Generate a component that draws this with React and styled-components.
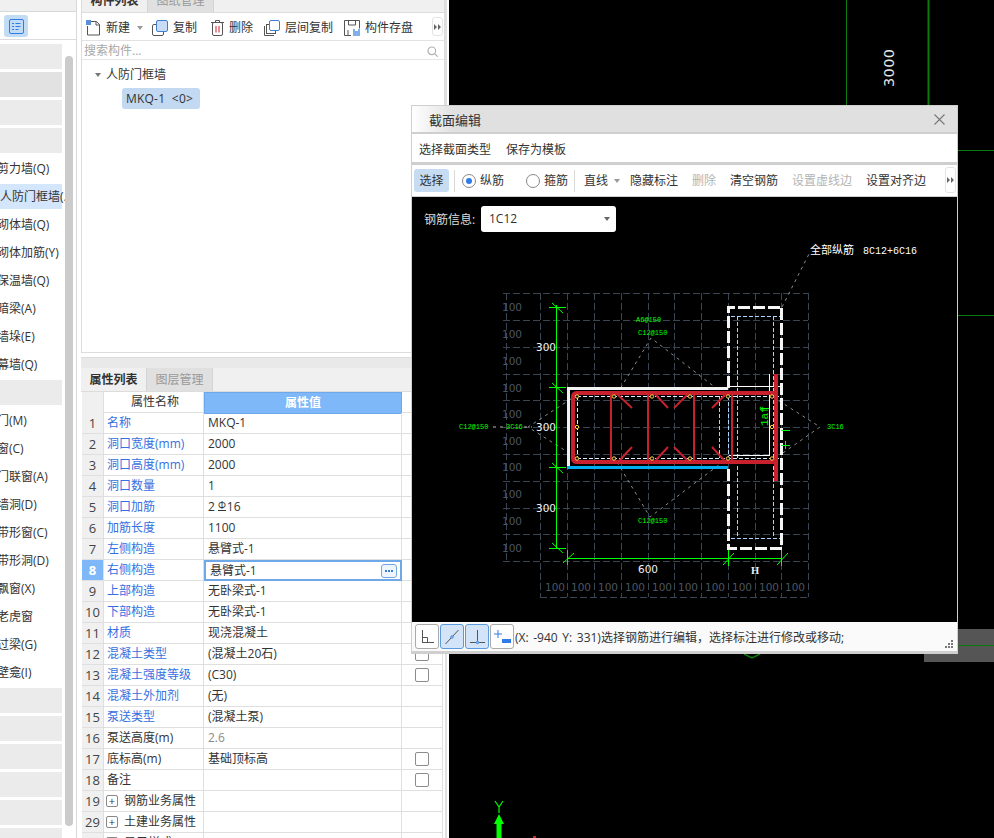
import React from 'react';
import styled, { createGlobalStyle } from 'styled-components';

const FONT = '"Open Sans", "Noto Sans CJK SC", sans-serif';

const GlobalStyle = createGlobalStyle`
  html, body {
    margin: 0;
    padding: 0;
    background: #fff;
    overflow: hidden;
  }
  * {
    box-sizing: border-box;
  }
`;

const Page = styled.div`
  position: relative;
  display: flex;
  width: 994px;
  height: 838px;
  overflow: hidden;
  font-family: ${FONT};
  font-size: 12px;
  line-height: 16px;
  color: #333;
`;

/* left nav */
const Sidebar = styled.aside`
  width: 77px;
  flex: none;
  margin-right: 4px;
  border-right: 1px solid #d8d8d8;
  display: flex;
  flex-direction: column;
  position: relative;
  overflow: hidden;
`;

const SideTop = styled.div`
  height: 12px;
  flex: none;
  background: #f0f0f0;
  border-bottom: 1px solid #d8d8d8;
`;

const SideTools = styled.div`
  height: 28px;
  flex: none;
  padding: 3px 0 0 4px;
  border-bottom: 1px solid #dcdcdc;
`;

const ToolIcon = styled.div`
  width: 24px;
  height: 22px;
  border-radius: 3px;
  background: #c2dcf6;
  display: flex;
  align-items: center;
  justify-content: center;
`;

const SideList = styled.div`
  padding-top: 4px;
  display: flex;
  flex-direction: column;
  gap: 3px;
  width: 62px;
`;

const SideRow = styled.div`
  height: 25px;
  flex: none;
  line-height: 25px;
  white-space: nowrap;
  text-indent: ${(p) => (p.$first ? '0' : '-3px')};
  background: ${(p) => p.$bg || 'transparent'};
`;

const ScrollThumb = styled.div`
  position: absolute;
  left: 65px;
  top: 56px;
  width: 8px;
  height: 770px;
  border-radius: 4px;
  background: #cbcbcb;
`;

/* middle column */
const Middle = styled.div`
  width: 364px;
  flex: none;
  display: flex;
  flex-direction: column;
`;

const TopPanel = styled.section`
  height: 353px;
  flex: none;
  border-left: 1px solid #dcdcdc;
  border-right: 1px solid #dcdcdc;
  border-bottom: 1px solid #dcdcdc;
  display: flex;
  flex-direction: column;
`;

const TabBar = styled.div`
  display: flex;
  flex: none;
  height: ${(p) => p.$h}px;
  margin-top: ${(p) => p.$top || 0}px;
  background: #f0f0f0;
  border-bottom: 1px solid #dcdcdc;
`;

const Tab = styled.div`
  width: 66px;
  display: flex;
  align-items: center;
  justify-content: center;
  padding-top: ${(p) => p.$pad || 0}px;
  font-weight: ${(p) => (p.$active ? 700 : 400)};
  color: ${(p) => (p.$active ? '#333' : '#999')};
  background: ${(p) => (p.$active ? '#f0f0f0' : '#e0e0e0')};
  border-right: 1px solid #d4d4d4;
`;

const Toolbar = styled.div`
  height: 28px;
  flex: none;
  display: flex;
  align-items: center;
  padding: 2px 0 0 4px;
  border-bottom: 1px solid #e2e2e2;
  position: relative;
`;

const ToolItem = styled.div`
  display: flex;
  align-items: center;
  gap: 5px;
  margin-left: ${(p) => p.$left || 0}px;
  margin-right: ${(p) => p.$gap}px;
  white-space: nowrap;
`;

const Caret = styled.span`
  width: 0;
  height: 0;
  display: inline-block;
  border-left: 3px solid transparent;
  border-right: 3px solid transparent;
  border-top: 4px solid ${(p) => p.$color || '#999'};
`;

const MoreButton = styled.div`
  position: absolute;
  right: ${(p) => p.$right}px;
  top: ${(p) => p.$top}px;
  width: 11px;
  height: ${(p) => p.$h}px;
  background: #fff;
  border: 1px solid #e4e4e4;
  border-radius: 3px;
  display: flex;
  align-items: center;
  justify-content: center;
`;

const SearchRow = styled.div`
  height: 19px;
  flex: none;
  display: flex;
  align-items: center;
  justify-content: space-between;
  padding: 2px 6px 0 2px;
  color: #a8a8a8;
  border-bottom: 1px solid #e6e6e6;
`;

const Tree = styled.div`
  flex: 1;
  padding: 6px 0 0 13px;
`;

const TreeRoot = styled.div`
  display: flex;
  align-items: center;
  gap: 5px;
  height: 18px;
`;

const TreeLeaf = styled.div`
  margin: 4px 0 0 27px;
  width: 78px;
  height: 21px;
  line-height: 21px;
  padding-left: 4px;
  border-radius: 3px;
  background: #c2d9f1;
  white-space: pre;
  letter-spacing: 0.2px;
`;

const PanelGap = styled.div`
  height: 11px;
  margin-top: 4px;
  flex: none;
  background: #e9e9e9;
  border-top: 1px solid #dcdcdc;
`;

const PropsTable = styled.div`
  margin-left: 1px;
  width: 361px;
`;

const Row = styled.div`
  display: grid;
  grid-template-columns: 22px 100px 198px 41px;
  height: 21px;
  line-height: 20px;
  border-bottom: 1px solid #dfdfdf;
  border-right: 1px solid #dfdfdf;
  white-space: nowrap;
`;

const NumCell = styled.div`
  text-align: center;
  border-right: 1px solid #dfdfdf;
  background: ${(p) => (p.$active ? '#7fb8f8' : '#f0f0f0')};
  color: ${(p) => (p.$active ? '#fff' : '#444')};
  font-weight: ${(p) => (p.$active ? 700 : 400)};
  font-size: 13px;
`;

const NameCell = styled.div`
  padding-left: ${(p) => (p.$tree ? '2px' : '3px')};
  border-right: 1px solid #dfdfdf;
  text-align: ${(p) => (p.$head ? 'center' : 'left')};
  color: ${(p) => (p.$blue ? '#3670e0' : '#333')};
  display: ${(p) => (p.$tree ? 'flex' : 'block')};
  align-items: center;
  gap: 6px;
`;

const ValueCell = styled.div`
  padding-left: 4px;
  border-right: 1px solid #dfdfdf;
  color: ${(p) => (p.$muted ? '#8a8a8a' : '#333')};
`;

const HeadValue = styled.div`
  background: #7fb8f8;
  color: #fff;
  font-weight: 700;
  text-align: center;
  border: 1px solid #6fa8ea;
`;

const EditCell = styled.div`
  border: 2px solid #6fa8e6;
  padding-left: 4px;
  line-height: 17px;
  margin-bottom: -1px;
  display: flex;
  align-items: center;
  justify-content: space-between;
  padding-right: 3px;
`;

const DotsButton = styled.span`
  width: 16px;
  height: 14px;
  border: 1px solid #6fa8e6;
  border-radius: 3px;
  background: #eef5fd;
  display: flex;
  align-items: center;
  justify-content: center;
  gap: 1px;
  & i {
    width: 2px;
    height: 2px;
    background: #3c7fd0;
  }
`;

const CheckCell = styled.div`
  display: flex;
  align-items: center;
  padding-left: 13px;
`;

const Check = styled.span`
  width: 14px;
  height: 14px;
  border: 1px solid #8c8c8c;
  border-radius: 2px;
  background: #fff;
`;

const Expand = styled.span`
  width: 12px;
  height: 12px;
  border: 1px solid #888;
  border-radius: 2px;
  line-height: 9px;
  text-align: center;
  font-size: 11px;
`;

const BarSymbol = styled.span`
  display: inline-block;
  font-size: 10px;
  line-height: 10px;
  margin: 0 1px 0 3px;
  vertical-align: 2px;
  border-bottom: 1px solid #333;
`;

const Strip = styled.div`
  width: 4px;
  flex: none;
  border-left: 2px solid #e0e0e0;
`;

/* black cad area */
const Canvas = styled.main`
  flex: 1;
  background: #000;
  min-width: 0;
`;

const Drawing = styled.svg`
  display: block;
`;

const GrayBlock = styled.div`
  position: absolute;
  left: 924px;
  top: 629px;
  width: 70px;
  height: 33px;
  padding-top: 16px;
  background: #555;
`;

const GrayLine = styled.div`
  height: 1px;
  background: #0a7a0a;
`;

/* dialog */
const Dialog = styled.div`
  position: absolute;
  left: 411px;
  top: 105px;
  width: 547px;
  height: 549px;
  background: #cfcfcf;
  display: flex;
  flex-direction: column;
  padding: 1px 1px 3px 1px;
`;

const TitleBar = styled.div`
  height: 26px;
  flex: none;
  display: flex;
  align-items: center;
  justify-content: space-between;
  padding: 1px 12px 0 17px;
  font-size: 13px;
  background: linear-gradient(90deg, #fff 0, #e0e0e0 42px);
`;

const MenuBar = styled.div`
  height: 28px;
  margin-top: 2px;
  flex: none;
  background: #fff;
  display: flex;
  align-items: center;
  padding: 4px 0 0 7px;
  gap: 15px;
`;

const DialogTools = styled.div`
  height: 31px;
  margin-top: 3px;
  flex: none;
  background: #fff;
  display: flex;
  align-items: center;
  padding-left: 2px;
  position: relative;
`;

const SelectBtn = styled.div`
  width: 35px;
  height: 23px;
  line-height: 23px;
  text-align: center;
  border-radius: 3px;
  background: #c5dcf3;
`;

const VSep = styled.div`
  width: 1px;
  height: 22px;
  background: #d8d8d8;
  margin: ${(p) => p.$m};
`;

const RadioWrap = styled.div`
  display: flex;
  align-items: center;
  gap: 4px;
  margin-right: ${(p) => p.$gap}px;
`;

const Radio = styled.span`
  width: 14px;
  height: 14px;
  border-radius: 50%;
  border: 1px solid #888;
  background: #fff;
  display: flex;
  align-items: center;
  justify-content: center;
  & i {
    width: 6px;
    height: 6px;
    border-radius: 50%;
    background: #2f7be8;
  }
`;

const DlgTool = styled.div`
  margin-right: ${(p) => p.$gap ?? 14}px;
  padding-top: 1px;
  white-space: nowrap;
  color: ${(p) => (p.$off ? '#b4b4b4' : '#333')};
  display: flex;
  align-items: center;
  gap: 6px;
`;

const DialogCanvas = styled.div`
  flex: 1;
  margin-top: 1px;
  background: #000;
  position: relative;
  min-height: 0;
`;

const InfoLabel = styled.div`
  position: absolute;
  left: 12px;
  top: 15px;
  color: #ddd;
`;

const InfoSelect = styled.div`
  position: absolute;
  left: 69px;
  top: 9px;
  width: 135px;
  height: 26px;
  background: #fff;
  border-radius: 3px;
  display: flex;
  align-items: center;
  justify-content: space-between;
  padding: 0 6px 0 8px;
`;

const StatusBar = styled.div`
  height: 29px;
  flex: none;
  background: #fafafa;
  display: flex;
  align-items: center;
  padding-left: 3px;
  position: relative;
  white-space: nowrap;
`;

const SnapButton = styled.div`
  width: 24px;
  height: 25px;
  margin-right: 1px;
  border-radius: 3px;
  border: 1px solid ${(p) => (p.$on ? '#5a9be0' : '#aaa')};
  background: ${(p) => (p.$on ? '#d3e4f9' : '#fff')};
  display: flex;
  align-items: center;
  justify-content: center;
`;

const StatusText = styled.span`
  font-size: 12px;
  word-spacing: 1.5px;
  margin-top: 3px;
`;

const Grip = styled.svg`
  position: absolute;
  right: 4px;
  bottom: 3px;
`;

const sideRows = [
  { bg: '#ebebeb' }, { bg: '#e2e2e2' }, { bg: '#ebebeb' }, { bg: '#ebebeb' },
  { t: '剪力墙(Q)' }, { t: '人防门框墙(.', bg: '#d3e6fb', first: true }, { t: '砌体墙(Q)' }, { t: '砌体加筋(Y)' },
  { t: '保温墙(Q)' }, { t: '暗梁(A)' }, { t: '墙垛(E)' }, { t: '幕墙(Q)' },
  { bg: '#ebebeb' },
  { t: '门(M)' }, { t: '窗(C)' }, { t: '门联窗(A)' }, { t: '墙洞(D)' }, { t: '带形窗(C)' },
  { t: '带形洞(D)' }, { t: '飘窗(X)' }, { t: '老虎窗' }, { t: '过梁(G)' }, { t: '壁龛(I)' },
  { bg: '#ebebeb' }, { bg: '#ebebeb' }, { bg: '#ebebeb' }, { bg: '#ebebeb' }, { bg: '#ebebeb' }, { bg: '#ebebeb' },
];

const props = [
  { n: 1, name: '名称', value: 'MKQ-1', blue: true },
  { n: 2, name: '洞口宽度(mm)', value: '2000', blue: true },
  { n: 3, name: '洞口高度(mm)', value: '2000', blue: true },
  { n: 4, name: '洞口数量', value: '1', blue: true },
  { n: 5, name: '洞口加筋', value: <>2<BarSymbol>Φ</BarSymbol>16</>, blue: true },
  { n: 6, name: '加筋长度', value: '1100', blue: true },
  { n: 7, name: '左侧构造', value: '悬臂式-1', blue: true },
  { n: 8, name: '右侧构造', value: '悬臂式-1', blue: true, edit: true },
  { n: 9, name: '上部构造', value: '无卧梁式-1', blue: true },
  { n: 10, name: '下部构造', value: '无卧梁式-1', blue: true },
  { n: 11, name: '材质', value: '现浇混凝土', blue: true },
  { n: 12, name: '混凝土类型', value: '(混凝土20石)', blue: true, check: true },
  { n: 13, name: '混凝土强度等级', value: '(C30)', blue: true, check: true },
  { n: 14, name: '混凝土外加剂', value: '(无)', blue: true },
  { n: 15, name: '泵送类型', value: '(混凝土泵)', blue: true },
  { n: 16, name: '泵送高度(m)', value: '2.6', muted: true },
  { n: 17, name: '底标高(m)', value: '基础顶标高', check: true },
  { n: 18, name: '备注', value: '', check: true },
  { n: 19, name: '钢筋业务属性', tree: true },
  { n: 29, name: '土建业务属性', tree: true },
  { n: '', name: '显示样式', tree: true },
];

const NewIcon = () => (
  <svg width="15" height="16" viewBox="0 0 15 16" fill="none">
    <path d="M1.5 6v9h12V4.500L10.500 1.500H4" stroke="#555" />
    <path d="M10 1.500v3.500h3.500" stroke="#555" />
    <rect x="0" y="0" width="5" height="5" fill="#5a90d8" />
  </svg>
);

const CopyIcon = () => (
  <svg width="16" height="16" viewBox="0 0 16 16" fill="none">
    <rect x="0.5" y="4.500" width="11" height="11" rx="1.500" stroke="#555" fill="#fff" />
    <rect x="4.500" y="0.500" width="11" height="11" rx="1.500" stroke="#3e7fd0" fill="#c9dcf5" />
  </svg>
);

const TrashIcon = () => (
  <svg width="13" height="16" viewBox="0 0 13 16" fill="none" stroke="#555">
    <path d="M0 2.500h13M4.500 2.500V.5h4v2" />
    <rect x="1.500" y="2.500" width="10" height="13" rx="1.500" />
    <path d="M5 6v6.500M8 6v6.500" stroke="#d0202a" />
  </svg>
);

const FloorCopyIcon = () => (
  <svg width="16" height="16" viewBox="0 0 16 16" fill="none">
    <path d="M.5 6v9.500H10" stroke="#555" />
    <rect x="2.500" y="4.500" width="9" height="9" fill="#fff" stroke="#555" />
    <rect x="5.500" y="0.500" width="10" height="10" rx="1.500" stroke="#3e7fd0" fill="#fff" />
  </svg>
);

const SaveIcon = () => (
  <svg width="16" height="16" viewBox="0 0 16 16" fill="none">
    <path d="M7 15.500H.5V.5h15v8" stroke="#555" />
    <path d="M4.500 1v4h7V1M4 15v-5" stroke="#555" />
    <rect x="9" y="9" width="7" height="7" fill="#7fb0e8" />
    <rect x="11" y="9" width="3" height="2" fill="#fff" />
  </svg>
);

const SearchIcon = () => (
  <svg width="11" height="11" viewBox="0 0 11 11" fill="none" stroke="#b0b0b0" strokeWidth="1.200">
    <circle cx="4.800" cy="4.800" r="3.800" />
    <path d="M7.700 7.700l3 3" />
  </svg>
);

const ListIcon = () => (
  <svg width="15" height="15" viewBox="0 0 15 15" fill="none" stroke="#2f7be8">
    <rect x=".5" y=".5" width="14" height="14" rx="1.500" />
    <path d="M3 4.500h2M6.500 4.500h5M3 7.500h2M6.500 7.500h5M3 10.500h2M6.500 10.500h3" />
  </svg>
);

const More = () => (
  <svg width="7" height="6" viewBox="0 0 7 6" fill="#666">
    <path d="M0 0l3 3-3 3zM4 0l3 3-3 3z" />
  </svg>
);

const CloseIcon = () => (
  <svg width="11" height="11" viewBox="0 0 11 11" stroke="#777" strokeWidth="1.100">
    <path d="M.5.500l10 10M10.500.500l-10 10" />
  </svg>
);

const Snap1 = () => (
  <svg width="16" height="16" viewBox="0 0 16 16" fill="none" stroke="#555">
    <path d="M3.500 1v13M3 13.500h12M3 8.500h5.500v5" />
  </svg>
);
const Snap2 = () => (
  <svg width="16" height="16" viewBox="0 0 16 16" fill="none" stroke="#555">
    <path d="M1.500 15L14.500 1" />
    <circle cx="8" cy="8" r="1.300" fill="#7fb0e8" stroke="#5a9be0" />
  </svg>
);
const Snap3 = () => (
  <svg width="16" height="16" viewBox="0 0 16 16" fill="none" stroke="#555">
    <path d="M8.500 1v12M1 13.500h15" />
    <circle cx="8.500" cy="13.500" r="1.300" fill="#7fb0e8" stroke="#5a9be0" />
  </svg>
);
const Snap4 = () => (
  <svg width="18" height="16" viewBox="0 0 18 16" fill="none">
    <path d="M5 1v8M1 5h8" stroke="#2f7be8" />
    <rect x="9" y="10" width="9" height="4" fill="#2f7be8" />
  </svg>
);

const hGrid = [293, 320, 347, 374, 400, 427, 454, 481, 508, 534, 561];
const vGrid = [540, 567, 594, 621, 648, 674, 701, 728, 755, 781, 808];
const leftLabels = [307, 334, 361, 388, 414, 441, 467, 494, 521, 548];
const bottomLabels = [555, 581, 608, 635, 662, 688, 715, 742, 769, 795];
const dotXs = [577, 614, 652, 690, 728, 772];

const GREEN = '#00ff00';
const RED = '#c8202d';
const ICE = '#a8d4ff';
const DIAG = '#8a8a8a';

const SectionDrawing = () => (
  <Drawing width="545" height="425" viewBox="412 197 545 425" shapeRendering="crispEdges">
    {/* grid */}
    <g stroke="#3a4553" strokeDasharray="7 3">
      {hGrid.map((y) => (
        <line key={y} x1="503" x2="808" y1={y + 0.5} y2={y + 0.5} />
      ))}
      <line x1="506.500" x2="506.500" y1="293" y2="561" />
      {vGrid.map((x) => (
        <line key={x} x1={x + 0.5} x2={x + 0.5} y1="293" y2="597" />
      ))}
      <line x1="540" x2="808" y1="597.500" y2="597.500" />
    </g>
    <g fill="#4c5662" fontFamily="DejaVu Sans, sans-serif" fontSize="10.500" textAnchor="middle">
      {leftLabels.map((y) => (
        <text key={y} x="512" y={y + 4}>100</text>
      ))}
      {bottomLabels.map((x) => (
        <text key={x} x={x} y="591">100</text>
      ))}
    </g>

    {/* leader lines */}
    <g stroke={DIAG} strokeDasharray="3 4" fill="none" shapeRendering="auto">
      <path d="M617 394L651 338L725 395" />
      <path d="M577 395L528 427L577 458" />
      <path d="M617 462L650 517L728 458" />
      <path d="M773 397L820 427L780 455" />
      <path d="M782 307L810 252" />
      <path d="M493 427H505M524 427H532" stroke="#bbb" />
    </g>

    {/* thin ice-blue stirrups */}
    <g stroke={ICE} strokeDasharray="4 2" fill="none">
      <path d="M731 316.500H781M731 538.500H781" />
      <path d="M737.500 316V538M773.500 316V538" />
      <path d="M719.500 396V458M728.500 396V458" />
      <path d="M577 396.500H781M577 458.500H781" stroke="#dfeeff" />
      <path d="M577.500 396V458" stroke="#dfeeff" />
    </g>

    {/* concrete outline */}
    <g fill="none">
      <path d="M567 388H728M568.500 388V466" stroke="#f2f2f2" strokeWidth="3" />
      <path d="M567 467.500H728" stroke="#00aeef" strokeWidth="3" />
      <path d="M728.500 388V307H781.500V548H728.500V467" stroke="#f5f5f5" strokeWidth="3" strokeDasharray="12 3" />
      <path d="M729 386.500H781M769.500 374V455.500H729" stroke="#fff" />
    </g>

    {/* rebar */}
    <g fill="none" stroke={RED} shapeRendering="auto">
      <path d="M775 393H577Q573 393 573 397V458Q573 462 577 462H775" strokeWidth="4" />
      <path d="M776 374V481" strokeWidth="4" />
      <path d="M611 393V462M648 393V462M694 393V462M732 393V462" strokeWidth="2" />
      <path
        d="M617 394L632 408M655 394L668 408M674 408L688 394M712 408L726 394M618 462L632 447M656 460L668 447M674 447L688 461M712 447L724 460"
        strokeWidth="2"
      />
    </g>
    <g fill="#000" stroke="#ffd84a" shapeRendering="auto">
      {dotXs.map((x) => (
        <React.Fragment key={x}>
          <circle cx={x} cy="396.500" r="1.700" />
          <circle cx={x} cy="458.500" r="1.700" />
        </React.Fragment>
      ))}
      <circle cx="577" cy="427" r="1.700" />
      <circle cx="772" cy="427" r="1.700" />
    </g>

    {/* dimensions */}
    <g stroke={GREEN} fill="none">
      <path d="M556.500 305V548M549 307.500H566M549 387.500H566M549 467.500H566M549 548.500H566" />
      <path d="M567 558.500H781" />
      <path d="M567.500 550V565M728.500 550V566M781.500 550V566" />
      <g shapeRendering="auto">
        <path d="M552 303L563 313M552 383L563 393M552 463L563 473M552 543L563 553" />
        <path d="M563 563L574 553M723 565L734 553M777 565L788 553" />
      </g>
      <path d="M761 408H769M781 430H789V431M781 445H790M785 441V449" />
    </g>
    <text x="768" y="426" fill={GREEN} fontFamily="Liberation Mono, monospace" fontSize="11" transform="rotate(-90 768 426)" shapeRendering="auto">1af</text>

    <g fill="#f2f2f2" fontFamily="DejaVu Sans, sans-serif" fontSize="10.500" textAnchor="middle">
      <text x="546" y="351">300</text>
      <text x="546" y="431">300</text>
      <text x="546" y="512">300</text>
      <text x="648" y="573">600</text>
      <text x="755" y="574" fontFamily="Liberation Serif, serif" fontWeight="700">H</text>
    </g>
    <text x="810" y="254" fill="#fff" fontFamily={FONT.replace(/"/g, '')} fontSize="11">全部纵筋</text>
    <text x="863" y="254" fill="#fff" fontFamily="Liberation Mono, monospace" fontSize="10">8C12+6C16</text>
    <g fill={GREEN} fontFamily="Liberation Mono, monospace" fontSize="7">
      <text x="636" y="322">A6@150</text>
      <text x="638" y="335">C12@150</text>
      <text x="638" y="523">C12@150</text>
      <text x="459" y="429">C12@150</text>
      <text x="506" y="429">3C16</text>
      <text x="827" y="429">3C16</text>
    </g>
  </Drawing>
);

const BackgroundDrawing = () => (
  <Drawing width="545" height="838" viewBox="449 0 545 838">
    <g stroke="#0a7a0a" fill="none">
      <path d="M846.500 0V110" />
      <path d="M928.500 0V110" strokeWidth="2" />
      <path d="M958 150.500H994M958 315.500H994" />
      <path d="M744 654L752 658L760 654" strokeWidth="1.500" />
    </g>
    <text
      x="894"
      y="87"
      fill="#e6e6e6"
      fontFamily="DejaVu Sans, sans-serif"
      fontSize="14.500"
      transform="rotate(-90 894 87)"
      textLength="38"
    >
      3000
    </text>
    <path d="M495 801L499 807L503 801M499 807V813" stroke={GREEN} fill="none" strokeWidth="1.200" />
    <path d="M499 814L504 824H501.500V838H496.500V824H494Z" fill={GREEN} />
    <rect x="533" y="836" width="3" height="2" fill="#d02020" />
  </Drawing>
);

const App = () => (
  <Page>
    <GlobalStyle />
    <Sidebar>
      <SideTop />
      <SideTools>
        <ToolIcon>
          <ListIcon />
        </ToolIcon>
      </SideTools>
      <SideList>
        {sideRows.map((r, i) => (
          <SideRow key={i} $bg={r.bg} $first={r.first}>
            {r.t}
          </SideRow>
        ))}
      </SideList>
      <ScrollThumb />
    </Sidebar>

    <Middle>
      <TopPanel>
        <TabBar $h={26} $top={-13}>
          <Tab $active $pad={3}>构件列表</Tab>
          <Tab $pad={3}>图纸管理</Tab>
        </TabBar>
        <Toolbar>
          <ToolItem $gap={7}>
            <NewIcon />
            新建
          </ToolItem>
          <Caret />
          <ToolItem $gap={14} $left={9}>
            <CopyIcon />
            复制
          </ToolItem>
          <ToolItem $gap={11}>
            <TrashIcon />
            删除
          </ToolItem>
          <ToolItem $gap={11}>
            <FloorCopyIcon />
            层间复制
          </ToolItem>
          <ToolItem $gap={0}>
            <SaveIcon />
            构件存盘
          </ToolItem>
          <MoreButton $right={1} $top={4} $h={19}>
            <More />
          </MoreButton>
        </Toolbar>
        <SearchRow>
          搜索构件...
          <SearchIcon />
        </SearchRow>
        <Tree>
          <TreeRoot>
            <Caret $color="#777" />
            人防门框墙
          </TreeRoot>
          <TreeLeaf>MKQ-1  &lt;0&gt;</TreeLeaf>
        </Tree>
      </TopPanel>

      <PanelGap />
      <TabBar $h={24}>
        <Tab $active>属性列表</Tab>
        <Tab>图层管理</Tab>
      </TabBar>
      <PropsTable>
        <Row>
          <NumCell />
          <NameCell $head>属性名称</NameCell>
          <HeadValue>属性值</HeadValue>
          <div />
        </Row>
        {props.map((p) => (
          <Row key={p.n || p.name}>
            <NumCell $active={p.edit}>{p.n}</NumCell>
            <NameCell $blue={p.blue} $tree={p.tree}>
              {p.tree && <Expand>+</Expand>}
              {p.name}
            </NameCell>
            {p.edit ? (
              <EditCell>
                {p.value}
                <DotsButton>
                  <i />
                  <i />
                  <i />
                </DotsButton>
              </EditCell>
            ) : (
              <ValueCell $muted={p.muted}>{p.value}</ValueCell>
            )}
            <CheckCell>{p.check && <Check />}</CheckCell>
          </Row>
        ))}
      </PropsTable>
    </Middle>

    <Strip />
    <Canvas>
      <BackgroundDrawing />
    </Canvas>

    <GrayBlock>
      <GrayLine />
    </GrayBlock>

    <Dialog>
      <TitleBar>
        截面编辑
        <CloseIcon />
      </TitleBar>
      <MenuBar>
        <span>选择截面类型</span>
        <span>保存为模板</span>
      </MenuBar>
      <DialogTools>
        <SelectBtn>选择</SelectBtn>
        <VSep $m="0 7px 0 5px" />
        <RadioWrap $gap={22}>
          <Radio>
            <i />
          </Radio>
          纵筋
        </RadioWrap>
        <RadioWrap $gap={6}>
          <Radio />
          箍筋
        </RadioWrap>
        <VSep $m="0 9px 0 0" />
        <DlgTool $gap={10}>
          直线
          <Caret />
        </DlgTool>
        <DlgTool>隐藏标注</DlgTool>
        <DlgTool $off>删除</DlgTool>
        <DlgTool>清空钢筋</DlgTool>
        <DlgTool $off>设置虚线边</DlgTool>
        <DlgTool>设置对齐边</DlgTool>
        <MoreButton $right={1} $top={2} $h={26}>
          <More />
        </MoreButton>
      </DialogTools>
      <DialogCanvas>
        <SectionDrawing />
        <InfoLabel>钢筋信息:</InfoLabel>
        <InfoSelect>
          1C12
          <Caret $color="#666" />
        </InfoSelect>
      </DialogCanvas>
      <StatusBar>
        <SnapButton>
          <Snap1 />
        </SnapButton>
        <SnapButton $on>
          <Snap2 />
        </SnapButton>
        <SnapButton $on>
          <Snap3 />
        </SnapButton>
        <SnapButton>
          <Snap4 />
        </SnapButton>
        <StatusText>(X: -940 Y: 331)选择钢筋进行编辑，选择标注进行修改或移动;</StatusText>
        <Grip width="8" height="8" viewBox="0 0 8 8" fill="#777">
          <rect x="6" y="0" width="2" height="2" />
          <rect x="3" y="3" width="2" height="2" />
          <rect x="6" y="3" width="2" height="2" />
          <rect x="0" y="6" width="2" height="2" />
          <rect x="3" y="6" width="2" height="2" />
          <rect x="6" y="6" width="2" height="2" />
        </Grip>
      </StatusBar>
    </Dialog>
  </Page>
);

export default App;
